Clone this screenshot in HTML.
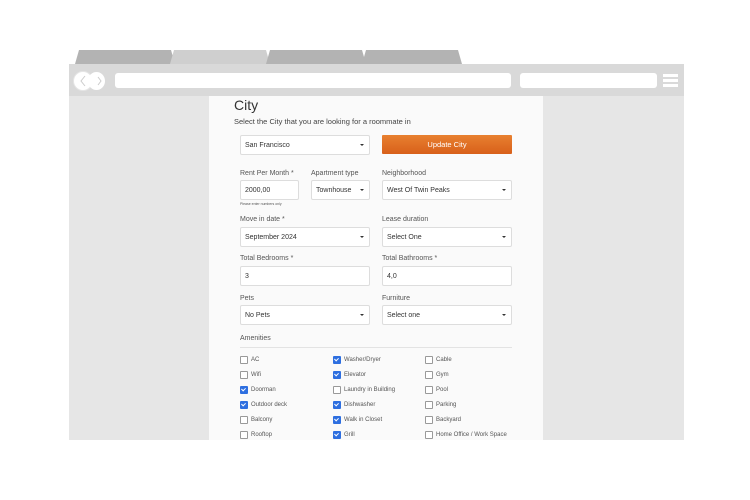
<!DOCTYPE html>
<html><head><meta charset="utf-8"><style>
*{margin:0;padding:0;box-sizing:border-box}
body{width:750px;height:500px;background:#fff;position:relative;overflow:hidden;font-family:"Liberation Sans",sans-serif;color:#444}
.a{position:absolute}
.tab{position:absolute;top:50px;height:14px;clip-path:polygon(4% 0,96% 0,100% 100%,0 100%)}
.frame{left:69px;top:64px;width:615px;height:376px;background:#d9d9d9}
.content{left:69px;top:96px;width:615px;height:344px;background:#e6e6e6}
.page{left:209px;top:96px;width:334px;height:344px;background:#fafafa}
.sel,.inp{position:absolute;height:20px;border:1px solid #ddd;border-radius:2px;background:#fff;font-size:7px;line-height:20px;padding-left:4px;color:#333}
.sel:after{content:"";position:absolute;right:5px;top:8px;border:2px solid transparent;border-top:2px solid #333;border-bottom:0}
.lbl{position:absolute;font-size:7px;color:#555}
.cb{position:absolute;font-size:6px;color:#555;line-height:8px;padding-left:11px}
.cb:before{content:"";position:absolute;left:0;top:0;width:6px;height:6px;border:1px solid #999;border-radius:1px;background:#fff}
.cb.on:before{background:#2e6fe0;border-color:#2e6fe0}
.cb.on:after{content:"";position:absolute;left:2px;top:1px;width:2px;height:3px;border:solid #fff;border-width:0 1px 1px 0;transform:rotate(45deg)}
</style></head><body>
<div class="tab" style="left:75px;width:100px;background:#b3b3b3"></div>
<div class="tab" style="left:170px;width:100px;background:#cfcfcf"></div>
<div class="tab" style="left:266px;width:100px;background:#b3b3b3"></div>
<div class="tab" style="left:362px;width:100px;background:#b3b3b3"></div>
<div class="a frame"></div>
<div class="a" style="left:73px;top:71px;width:20px;height:20px;border-radius:50%;background:#fff;border:1px solid #e5e5e5"></div>
<div class="a" style="left:88px;top:72px;width:17px;height:18px;border-radius:50%;background:#fff"></div>
<svg class="a" style="left:73px;top:71px" width="34" height="20"><path d="M12 5 L8 10 L12 15" fill="none" stroke="#ccc" stroke-width="1"/><path d="M25 6 L28 10 L25 14" fill="none" stroke="#ccc" stroke-width="1"/></svg>
<div class="a" style="left:115px;top:73px;width:396px;height:15px;background:#fff;border-radius:3px"></div>
<div class="a" style="left:520px;top:73px;width:137px;height:15px;background:#fff;border-radius:3px"></div>
<div class="a" style="left:663px;top:74px;width:15px;height:3px;background:#fff"></div>
<div class="a" style="left:663px;top:79px;width:15px;height:3px;background:#fff"></div>
<div class="a" style="left:663px;top:84px;width:15px;height:3px;background:#fff"></div>
<div class="a content"></div>
<div class="a page"></div>
<div class="a" style="left:234px;top:97px;font-size:14px;color:#333">City</div>
<div class="a" style="left:234px;top:117px;font-size:7.5px;color:#444">Select the City that you are looking for a roommate in</div>
<div class="sel" style="left:240px;top:135px;width:130px">San Francisco</div>
<div class="a" style="left:382px;top:135px;width:130px;height:19px;background:linear-gradient(#e88030,#d8601a);color:#fff;font-size:7.5px;text-align:center;line-height:19px;border-radius:1px">Update City</div>
<div class="lbl" style="left:240px;top:170px">Rent Per Month *</div>
<div class="lbl" style="left:311px;top:170px">Apartment type</div>
<div class="lbl" style="left:382px;top:170px">Neighborhood</div>
<div class="inp" style="left:240px;top:180px;width:59px">2000,00</div>
<div class="sel" style="left:311px;top:180px;width:59px">Townhouse</div>
<div class="sel" style="left:382px;top:180px;width:130px">West Of Twin Peaks</div>
<div class="a" style="left:240px;top:202px;font-size:3.5px;color:#555">Please enter numbers only</div>
<div class="lbl" style="left:240px;top:216px">Move in date *</div>
<div class="lbl" style="left:382px;top:216px">Lease duration</div>
<div class="sel" style="left:240px;top:227px;width:130px">September 2024</div>
<div class="sel" style="left:382px;top:227px;width:130px">Select One</div>
<div class="lbl" style="left:240px;top:255px">Total Bedrooms *</div>
<div class="lbl" style="left:382px;top:255px">Total Bathrooms *</div>
<div class="inp" style="left:240px;top:266px;width:130px">3</div>
<div class="inp" style="left:382px;top:266px;width:130px">4,0</div>
<div class="lbl" style="left:240px;top:295px">Pets</div>
<div class="lbl" style="left:382px;top:295px">Furniture</div>
<div class="sel" style="left:240px;top:305px;width:130px">No Pets</div>
<div class="sel" style="left:382px;top:305px;width:130px">Select one</div>
<div class="lbl" style="left:240px;top:335px">Amenities</div>
<div class="a" style="left:240px;top:347px;width:272px;height:1px;background:#e3e3e3"></div>
<div class="cb" style="left:240px;top:356px">AC</div>
<div class="cb on" style="left:333px;top:356px">Washer/Dryer</div>
<div class="cb" style="left:425px;top:356px">Cable</div>
<div class="cb" style="left:240px;top:371px">Wifi</div>
<div class="cb on" style="left:333px;top:371px">Elevator</div>
<div class="cb" style="left:425px;top:371px">Gym</div>
<div class="cb on" style="left:240px;top:386px">Doorman</div>
<div class="cb" style="left:333px;top:386px">Laundry in Building</div>
<div class="cb" style="left:425px;top:386px">Pool</div>
<div class="cb on" style="left:240px;top:401px">Outdoor deck</div>
<div class="cb on" style="left:333px;top:401px">Dishwasher</div>
<div class="cb" style="left:425px;top:401px">Parking</div>
<div class="cb" style="left:240px;top:416px">Balcony</div>
<div class="cb on" style="left:333px;top:416px">Walk in Closet</div>
<div class="cb" style="left:425px;top:416px">Backyard</div>
<div class="cb" style="left:240px;top:431px">Rooftop</div>
<div class="cb on" style="left:333px;top:431px">Grill</div>
<div class="cb" style="left:425px;top:431px">Home Office / Work Space</div>
</body></html>
